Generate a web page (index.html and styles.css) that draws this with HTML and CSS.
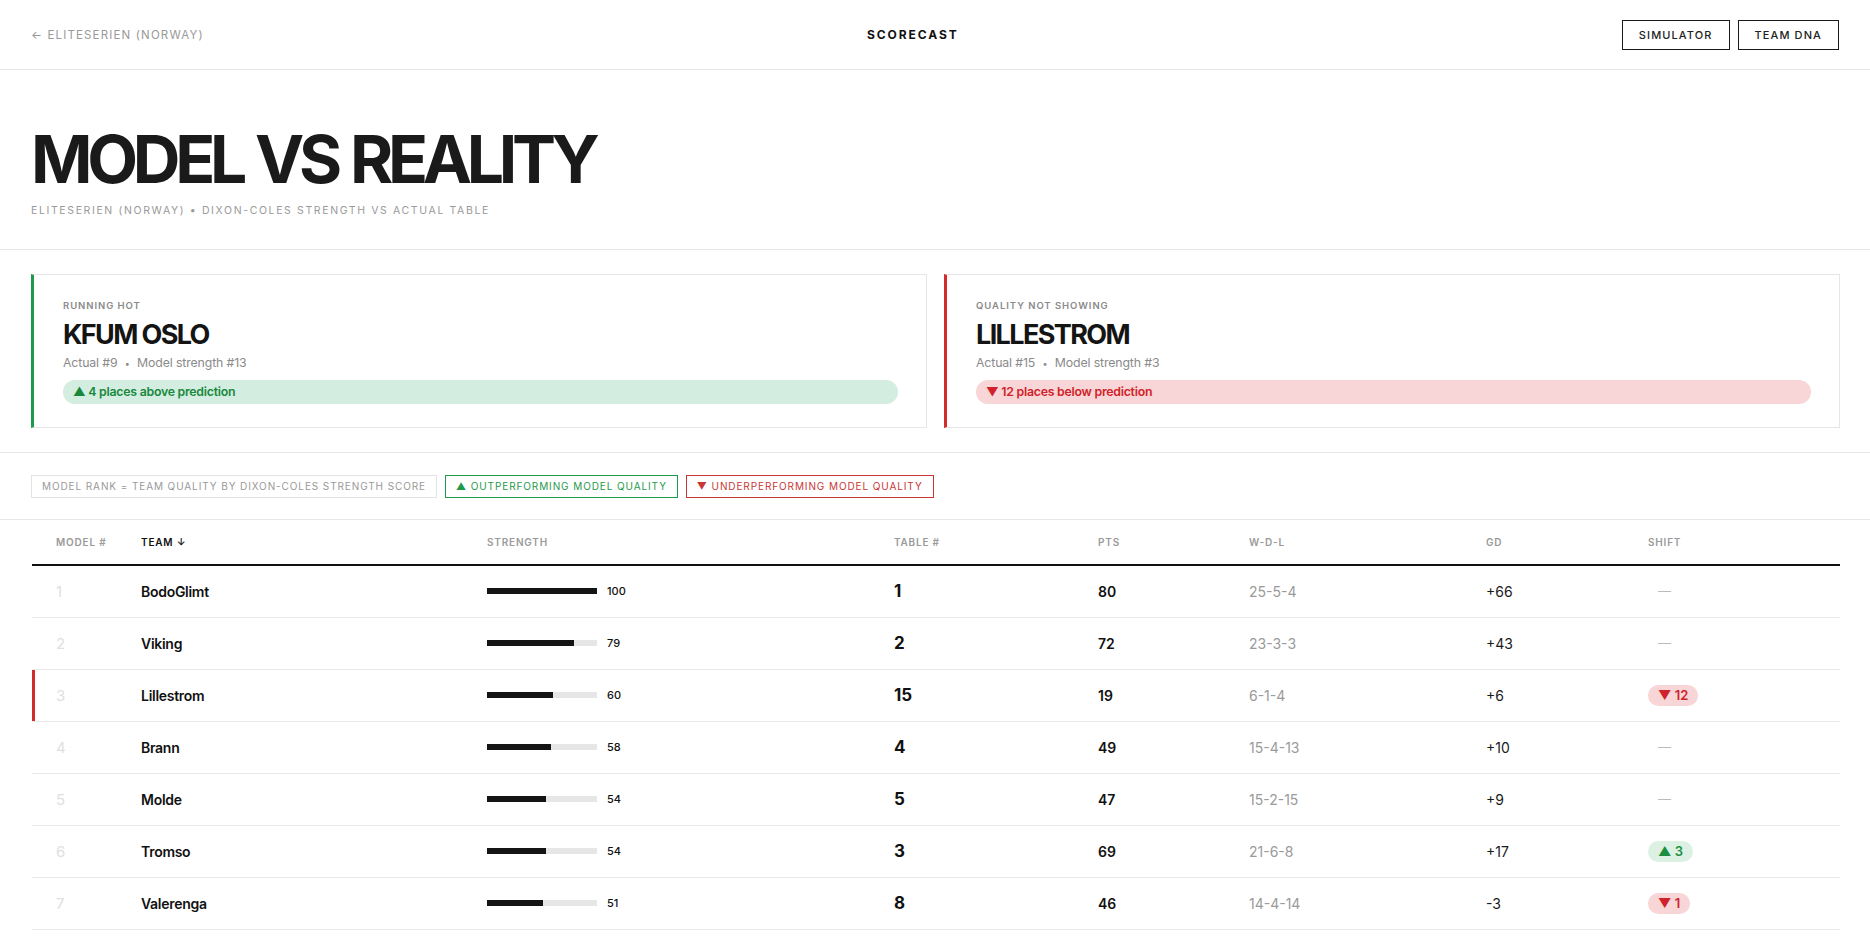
FILE: index.html
```html
<!DOCTYPE html>
<html lang="en">
<head>
  <meta charset="UTF-8">
  <title>Model vs Reality - Scorecast</title>
  <meta name="viewport" content="width=device-width, initial-scale=1.0">
  <link rel="stylesheet" href="styles.css">
</head>
<body>

<header class="topbar">
  <a class="back" href="#">&larr; Eliteserien (Norway)</a>
  <div class="brand">Scorecast</div>
  <nav class="nav">
    <a class="nav-btn" href="#">Simulator</a>
    <a class="nav-btn" href="#">Team DNA</a>
  </nav>
</header>

<section class="hero">
  <h1>Model vs Reality</h1>
  <p class="sub">Eliteserien (Norway) &bull; Dixon-Coles strength vs actual table</p>
</section>

<section class="cards">
  <div class="card hot">
    <div class="card-label">Running hot</div>
    <div class="card-team">KFUM OSLO</div>
    <div class="card-meta">Actual #9 <span class="dot">&bull;</span> Model strength #13</div>
    <div class="pill up">&#9650; 4 places above prediction</div>
  </div>
  <div class="card cold">
    <div class="card-label">Quality not showing</div>
    <div class="card-team">LILLESTROM</div>
    <div class="card-meta">Actual #15 <span class="dot">&bull;</span> Model strength #3</div>
    <div class="pill down">&#9660; 12 places below prediction</div>
  </div>
</section>

<section class="legend">
  <span class="tag">Model rank = team quality by Dixon-Coles strength score</span>
  <span class="tag up">&#9650; Outperforming model quality</span>
  <span class="tag down">&#9660; Underperforming model quality</span>
</section>

<section class="table-wrap">
  <table class="standings">
    <colgroup>
      <col style="width:85px">
      <col style="width:346px">
      <col style="width:407px">
      <col style="width:204px">
      <col style="width:151px">
      <col style="width:237px">
      <col style="width:162px">
      <col>
    </colgroup>
    <thead>
      <tr>
        <th>Model #</th>
        <th class="sorted">Team &darr;</th>
        <th>Strength</th>
        <th>Table #</th>
        <th>Pts</th>
        <th>W-D-L</th>
        <th>GD</th>
        <th>Shift</th>
      </tr>
    </thead>
    <tbody>
      <tr>
        <td class="rank">1</td>
        <td class="team">BodoGlimt</td>
        <td><div class="strength"><div class="track"><div class="fill" style="width:100%"></div></div><span>100</span></div></td>
        <td class="pos">1</td>
        <td class="pts">80</td>
        <td class="wdl">25-5-4</td>
        <td class="gd">+66</td>
        <td><span class="shift none">&mdash;</span></td>
      </tr>
      <tr>
        <td class="rank">2</td>
        <td class="team">Viking</td>
        <td><div class="strength"><div class="track"><div class="fill" style="width:79%"></div></div><span>79</span></div></td>
        <td class="pos">2</td>
        <td class="pts">72</td>
        <td class="wdl">23-3-3</td>
        <td class="gd">+43</td>
        <td><span class="shift none">&mdash;</span></td>
      </tr>
      <tr class="flag-down">
        <td class="rank">3</td>
        <td class="team">Lillestrom</td>
        <td><div class="strength"><div class="track"><div class="fill" style="width:60%"></div></div><span>60</span></div></td>
        <td class="pos">15</td>
        <td class="pts">19</td>
        <td class="wdl">6-1-4</td>
        <td class="gd">+6</td>
        <td><span class="shift down">&#9660; 12</span></td>
      </tr>
      <tr>
        <td class="rank">4</td>
        <td class="team">Brann</td>
        <td><div class="strength"><div class="track"><div class="fill" style="width:58%"></div></div><span>58</span></div></td>
        <td class="pos">4</td>
        <td class="pts">49</td>
        <td class="wdl">15-4-13</td>
        <td class="gd">+10</td>
        <td><span class="shift none">&mdash;</span></td>
      </tr>
      <tr>
        <td class="rank">5</td>
        <td class="team">Molde</td>
        <td><div class="strength"><div class="track"><div class="fill" style="width:54%"></div></div><span>54</span></div></td>
        <td class="pos">5</td>
        <td class="pts">47</td>
        <td class="wdl">15-2-15</td>
        <td class="gd">+9</td>
        <td><span class="shift none">&mdash;</span></td>
      </tr>
      <tr>
        <td class="rank">6</td>
        <td class="team">Tromso</td>
        <td><div class="strength"><div class="track"><div class="fill" style="width:54%"></div></div><span>54</span></div></td>
        <td class="pos">3</td>
        <td class="pts">69</td>
        <td class="wdl">21-6-8</td>
        <td class="gd">+17</td>
        <td><span class="shift up">&#9650; 3</span></td>
      </tr>
      <tr>
        <td class="rank">7</td>
        <td class="team">Valerenga</td>
        <td><div class="strength"><div class="track"><div class="fill" style="width:51%"></div></div><span>51</span></div></td>
        <td class="pos">8</td>
        <td class="pts">46</td>
        <td class="wdl">14-4-14</td>
        <td class="gd">-3</td>
        <td><span class="shift down">&#9660; 1</span></td>
      </tr>
    </tbody>
  </table>
</section>

</body>
</html>
```

FILE: styles.css
```css
* {
  box-sizing: border-box;
}
body {
  margin: 0;
  background: #fff;
  color: #111;
  font-family: Inter, 'Liberation Sans', sans-serif;
}
a {
  color: inherit;
  text-decoration: none;
}

/* top bar */
.topbar {
  display: flex;
  align-items: center;
  justify-content: space-between;
  height: 70px;
  padding: 0 31px;
  border-bottom: 1px solid #e6e6e6;
}
.back {
  font-size: 11.5px;
  letter-spacing: 0.1em;
  text-transform: uppercase;
  color: #999;
}
.brand {
  font-size: 12px;
  font-weight: 700;
  letter-spacing: 0.16em;
  text-transform: uppercase;
}
.nav {
  display: flex;
  gap: 8px;
}
.nav-btn {
  display: flex;
  align-items: center;
  justify-content: center;
  height: 30px;
  padding: 0 16px;
  border: 1.5px solid #1a1a1a;
  font-size: 11px;
  font-weight: 500;
  letter-spacing: 0.1em;
  text-transform: uppercase;
  white-space: nowrap;
  color: #222;
}

/* hero */
.hero {
  padding: 56px 31px 30px;
  border-bottom: 1px solid #e6e6e6;
}
.hero h1 {
  margin: 0 0 11px;
  font-size: 66px;
  line-height: 1;
  font-weight: 700;
  letter-spacing: -0.08em;
  word-spacing: 0.04em;
  text-transform: uppercase;
  color: #1a1a1a;
}
.sub {
  margin: 0;
  font-size: 10.5px;
  line-height: 16px;
  letter-spacing: 0.155em;
  text-transform: uppercase;
  color: #9a9a9a;
}

/* highlight cards */
.cards {
  display: grid;
  grid-template-columns: 1fr 1fr;
  gap: 17px;
  padding: 24px 30px 24px 31px;
  border-bottom: 1px solid #e6e6e6;
}
.card {
  height: 154px;
  padding: 24px 28px 0 29px;
  border: 1px solid #e6e6e6;
  border-left: 3px solid #1f9a4a;
}
.card.cold {
  border-left-color: #d52b2b;
}
.card-label {
  font-size: 9.5px;
  line-height: 14px;
  font-weight: 600;
  letter-spacing: 0.1em;
  text-transform: uppercase;
  color: #8a8a8a;
}
.card-team {
  margin-top: 6px;
  font-size: 27px;
  line-height: 32px;
  font-weight: 700;
  letter-spacing: -0.06em;
  color: #141414;
}
.card-meta {
  margin-top: 4px;
  font-size: 12.3px;
  line-height: 16px;
  letter-spacing: -0.01em;
  color: #8a8a8a;
}
.card-meta .dot {
  margin: 0 4px;
  font-size: 9px;
}
.pill {
  margin-top: 8px;
  height: 24px;
  line-height: 24px;
  padding: 0 10px;
  border-radius: 12px;
  font-size: 12.3px;
  font-weight: 600;
  letter-spacing: -0.02em;
}
.pill.up {
  background: #d3ede0;
  color: #17883c;
}
.pill.down {
  background: #f8d5d6;
  color: #d0222a;
}

/* legend */
.legend {
  display: flex;
  gap: 8px;
  padding: 22px 31px 21px;
  border-bottom: 1px solid #e6e6e6;
}
.tag {
  height: 23px;
  line-height: 21px;
  padding: 0 10px;
  border: 1px solid #e3e3e3;
  font-size: 10px;
  letter-spacing: 0.09em;
  text-transform: uppercase;
  color: #999;
}
.tag.up {
  border-color: #1f9a4a;
  color: #1f9a4a;
}
.tag.down {
  border-color: #c93636;
  color: #c93636;
}

/* standings table */
.table-wrap {
  padding: 0 30px 0 32px;
}
.standings {
  width: 100%;
  border-collapse: collapse;
  table-layout: fixed;
}
.standings th {
  height: 45px;
  padding: 0 24px;
  text-align: left;
  font-size: 10px;
  font-weight: 600;
  letter-spacing: 0.08em;
  text-transform: uppercase;
  white-space: nowrap;
  color: #9a9a9a;
  border-bottom: 2px solid #111;
}
.standings th.sorted {
  color: #111;
}
.standings td {
  height: 52px;
  padding: 0 24px;
  font-size: 14px;
  border-bottom: 1px solid #e8e8e8;
}
.standings .rank {
  font-size: 15px;
  color: #e0e0e0;
}
.standings .team {
  font-weight: 600;
  letter-spacing: -0.02em;
}
.flag-down .rank {
  box-shadow: inset 3px 0 0 #d52b2b;
}
.strength {
  display: flex;
  align-items: center;
  gap: 10px;
}
.track {
  width: 110px;
  height: 6px;
  background: #e6e6e6;
}
.fill {
  height: 100%;
  background: #141414;
}
.strength span {
  font-size: 11px;
  font-weight: 500;
}
.standings .pos {
  font-size: 17px;
  font-weight: 700;
}
.standings .pts {
  font-weight: 600;
}
.standings .wdl {
  color: #9a9a9a;
}
.standings .gd {
  color: #1a1a1a;
}
.shift {
  display: inline-block;
  height: 21px;
  line-height: 21px;
  padding: 0 10px;
  border-radius: 11px;
  font-size: 13px;
  font-weight: 600;
}
.shift.none {
  color: #bbb;
  font-weight: 400;
}
.shift.up {
  background: #dcf1e3;
  color: #1b8e40;
}
.shift.down {
  background: #f8d5d6;
  color: #d0222a;
}
```
